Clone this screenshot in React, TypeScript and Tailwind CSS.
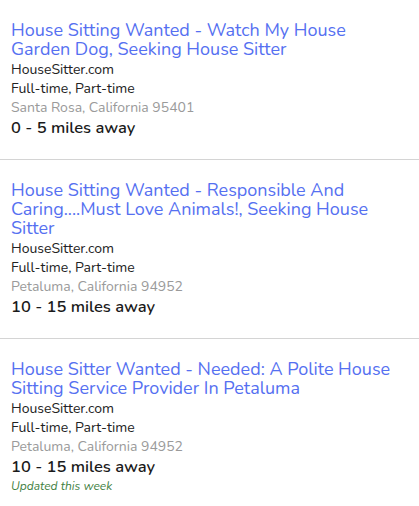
const jobs = [
  {
    title: 'House Sitting Wanted - Watch My House Garden Dog, Seeking House Sitter',
    location: 'Santa Rosa, California 95401',
    distance: '0 - 5 miles away',
    updated: '',
  },
  {
    title: 'House Sitting Wanted - Responsible And Caring....Must Love Animals!, Seeking House Sitter',
    location: 'Petaluma, California 94952',
    distance: '10 - 15 miles away',
    updated: '',
  },
  {
    title: 'House Sitter Wanted - Needed: A Polite House Sitting Service Provider In Petaluma',
    location: 'Petaluma, California 94952',
    distance: '10 - 15 miles away',
    updated: 'Updated this week',
  },
];

export default function App() {
  return (
    <div className="w-[419px] bg-white font-['Nunito','Lato','Noto_Sans',sans-serif]">
      {jobs.map((job, i) => (
        <div key={i} className={i < jobs.length - 1 ? 'border-b border-[#d4d4d4] pl-[11px] pr-[20px] pt-[21px] pb-[21px]' : 'pl-[11px] pr-[20px] pt-[21px] pb-5'}>
          <a className="block text-[18px] leading-[19px] text-[#5570f1] mb-px">{job.title}</a>
          <div className="text-[14px] leading-[19px] text-[#222]">HouseSitter.com</div>
          <div className="text-[14px] leading-[19px] text-[#222]">Full-time, Part-time</div>
          <div className="text-[14px] leading-[19px] text-[#9a9a9a]">{job.location}</div>
          <div className="text-[16.5px] leading-[21px] font-semibold text-[#1a1a1a]">{job.distance}</div>
          {job.updated && <div className="text-[12px] leading-[19px] italic text-[#3f7f3f]">{job.updated}</div>}
        </div>
      ))}
    </div>
  );
}
